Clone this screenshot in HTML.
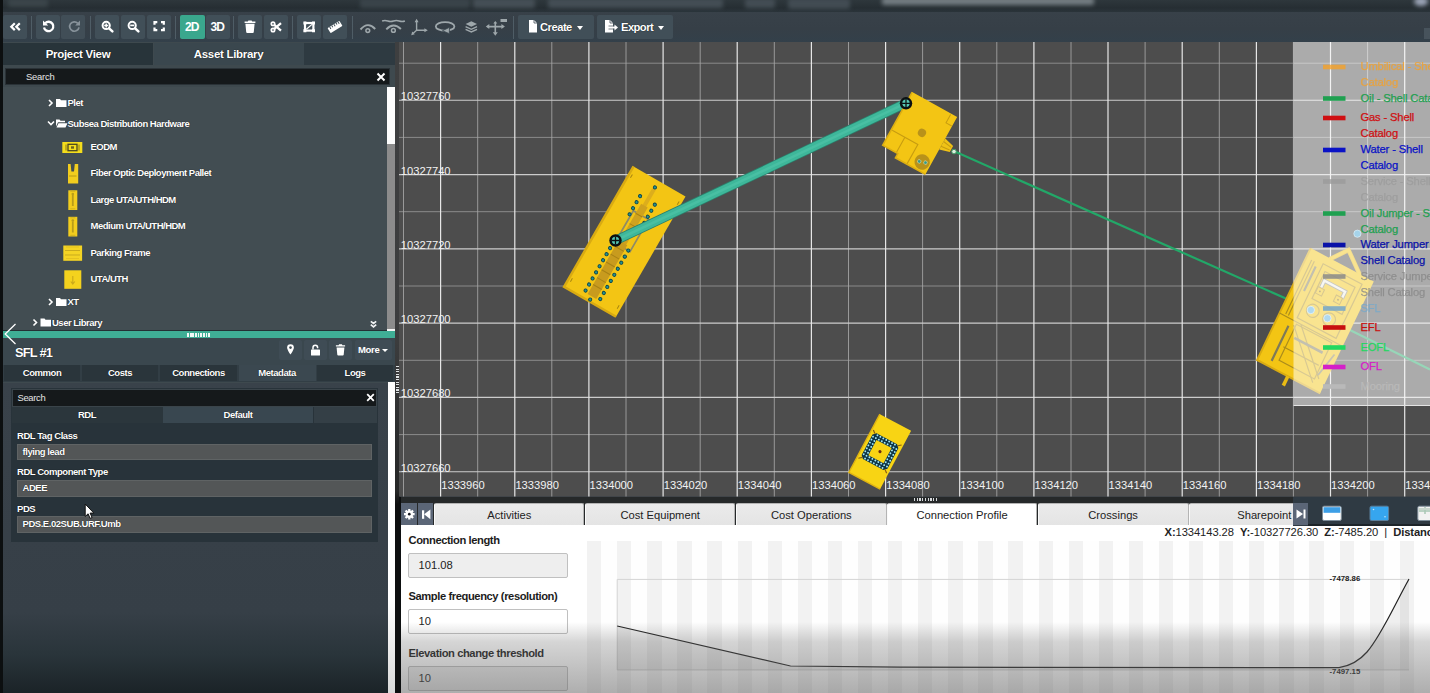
<!DOCTYPE html>
<html lang="en">
<head>
<meta charset="utf-8">
<title>Field layout</title>
<style>
*{box-sizing:border-box;margin:0;padding:0}
html,body{width:1430px;height:693px;overflow:hidden;background:#363f47;font-family:"Liberation Sans",sans-serif;}
#app{position:relative;width:1430px;height:693px;overflow:hidden;background:#363f47;}
.abs{position:absolute}
/* top strip */
#topstrip{left:0;top:0;width:1430px;height:13px;background:linear-gradient(#2e373c,#262e33 60%,#2b353b);overflow:hidden}
.blob{position:absolute;filter:blur(2px);border-radius:2px}
#toolbar{left:0;top:12px;width:1430px;height:30px;background:linear-gradient(#384149,#363f47 55%,#33404a);}
.tb{position:absolute;top:15px;height:24px;width:24px;background:#414f58;border-radius:2px}
.tb svg{position:absolute;left:0;top:0}
.tsep{position:absolute;top:16px;height:23px;width:1px;background:#4f5d66}
.tbtxt{color:#fff;font-size:12px;font-weight:bold;line-height:24.500px;text-align:center;letter-spacing:-0.900px;text-indent:-0.500px}
/* left panel */
#left{left:0;top:42px;width:396px;height:651px;background:#3e494e}
.ltab{position:absolute;top:43px;height:22px;color:#fff;font-size:11.5px;font-weight:bold;text-align:center;line-height:22px;letter-spacing:-0.3px;text-shadow:0 0 1px #000}
.search{position:absolute;background:#15191b;color:#e6e6e6;font-size:9.400px;font-weight:normal !important}
.tree{position:absolute;color:#fff;font-size:9.5px;font-weight:bold;letter-spacing:-0.35px;white-space:nowrap;line-height:12px;text-shadow:0 0 1px #111}
.ptab{position:absolute;top:364.600px;height:16.600px;line-height:16.400px;color:#fff;font-size:9.500px;font-weight:bold;text-align:center;letter-spacing:-0.450px;background:#2a353b;text-shadow:0 0 1px #000;white-space:nowrap}
.plabel{position:absolute;left:17px;color:#fff;font-size:9.500px;font-weight:bold;letter-spacing:-0.450px;line-height:12px;white-space:nowrap;text-shadow:0 0 1px #000}
.pinput{position:absolute;left:17px;width:355px;height:16.500px;background:#535657;border:1px solid #5f6364;color:#fff;font-size:9.500px;font-weight:bold;letter-spacing:-0.450px;line-height:14.500px;padding-left:4.500px;white-space:nowrap;text-shadow:0 0 1px #000}
.tree{letter-spacing:-0.500px}
.btab{position:absolute;top:502.500px;height:22px;line-height:22px;text-align:center;font-size:11.200px;color:#222;letter-spacing:0;border:1px solid #b4b4b4;border-left:1.500px solid #fafafa;border-bottom:none;border-radius:2px 2px 0 0;white-space:nowrap}
.blabel{position:absolute;left:408.500px;font-size:11.200px;font-weight:bold;color:#1c1c1c;letter-spacing:-0.420px;line-height:15px;white-space:nowrap}
.binput{position:absolute;left:408px;width:159.500px;height:25px;border:1px solid #c0c0c0;border-radius:2px;font-size:11.200px;color:#222;line-height:23px;padding-left:9.500px;letter-spacing:0}
</style>
</head>
<body>
<div id="app">
<div id="topstrip" class="abs"><div class="blob" style="left:8px;top:-2px;width:40px;height:9px;background:#3b454a"></div><div class="blob" style="left:360px;top:-2px;width:110px;height:10px;background:#3a444a"></div><div class="blob" style="left:473px;top:-2px;width:62px;height:10px;background:#454f56"></div><div class="blob" style="left:548px;top:-2px;width:175px;height:10px;background:#444e55"></div><div class="blob" style="left:745px;top:-2px;width:30px;height:10px;background:#434d54"></div><div class="blob" style="left:788px;top:-2px;width:62px;height:11px;background:#424c53"></div><div class="blob" style="left:882px;top:-3px;width:212px;height:8px;background:#747d82"></div><div class="blob" style="left:1414px;top:-3px;width:14px;height:9px;background:#9aa3b5;border-radius:50%"></div></div>
<div id="toolbar" class="abs"></div><div class="abs" style="left:1424px;top:28px;width:6px;height:11px;background:#47535c"></div>
<div id="left" class="abs"></div>
<!-- toolbar buttons -->
<div class="tsep" style="left:31px"></div>
<div class="tsep" style="left:90px"></div>
<div class="tsep" style="left:175px"></div>
<div class="tsep" style="left:233px"></div>
<div class="tsep" style="left:292px"></div>
<div class="tsep" style="left:352px"></div>
<div class="tsep" style="left:513px"></div>
<div class="tb" style="left:3px"><svg width="24" height="24" viewBox="0 0 24 24"><path d="M11.800 8.300 8.300 11.700l3.500 3.400M16.800 8.300 13.300 11.700l3.500 3.400" fill="none" stroke="#fff" stroke-width="2.200"/></svg></div>
<div class="tb" style="left:36px"><svg width="24" height="24" viewBox="0 0 24 24"><path d="M9.200 8.200A4.700 4.700 0 1 1 8 12.400" fill="none" stroke="#fff" stroke-width="2.300"/><path d="M7 5.400v5.200h5.200z" fill="#fff"/></svg></div>
<div class="tb" style="left:61px;background:#414e57"><svg width="24" height="24" viewBox="0 0 24 24"><path d="M16.800 8.300A4.700 4.700 0 1 0 18 12.300" fill="none" stroke="#87929a" stroke-width="1.700"/><path d="M19 5.600v4.800h-4.800z" fill="#87929a"/></svg></div>
<div class="tb" style="left:95px"><svg width="24" height="24" viewBox="0 0 24 24"><circle cx="11.200" cy="10.400" r="3.600" fill="none" stroke="#fff" stroke-width="2"/><path d="M14.100 13.300 17.400 16.400" stroke="#fff" stroke-width="2.500" stroke-linecap="round"/><path d="M9.200 10.400h4M11.200 8.400v4" stroke="#fff" stroke-width="1.500"/></svg></div>
<div class="tb" style="left:120.5px"><svg width="24" height="24" viewBox="0 0 24 24"><circle cx="11.200" cy="10.400" r="3.600" fill="none" stroke="#fff" stroke-width="2"/><path d="M14.100 13.300 17.400 16.400" stroke="#fff" stroke-width="2.500" stroke-linecap="round"/><path d="M9.200 10.400h4" stroke="#fff" stroke-width="1.700"/></svg></div>
<div class="tb" style="left:146.5px"><svg width="24" height="24" viewBox="0 0 24 24"><path d="M7.500 9.800V7.200H10.300M14 7.200h2.800V9.800M16.800 12.600v2.600H14M10.300 15.200H7.500V12.600" fill="none" stroke="#fff" stroke-width="2.200"/></svg></div>
<div class="tb tbtxt" style="left:179.5px;width:25px;background:#3aa78d;box-shadow:none;border-radius:2px">2D</div>
<div class="tb tbtxt" style="left:205.5px;width:24px">3D</div>
<div class="tb" style="left:238px"><svg width="24" height="24" viewBox="0 0 24 24"><path d="M7.4 8.8h9.2l-.8 8.3a1 1 0 0 1-1 .9H9.2a1 1 0 0 1-1-.9z" fill="#fff"/><path d="M6.6 6.4h3.2l.6-1h3.2l.6 1h3.2v1.5H6.600z" fill="#fff"/></svg></div>
<div class="tb" style="left:263.5px"><svg width="24" height="24" viewBox="0 0 24 24"><circle cx="9" cy="8.800" r="1.700" fill="none" stroke="#fff" stroke-width="1.700"/><circle cx="9" cy="15" r="1.700" fill="none" stroke="#fff" stroke-width="1.700"/><path d="M10.300 9.900 17 15.600M10.300 13.900 17 8.200" stroke="#fff" stroke-width="2.300"/></svg></div>
<div class="tb" style="left:297px"><svg width="24" height="24" viewBox="0 0 24 24"><rect x="8" y="8" width="8.400" height="7.600" fill="none" stroke="#fff" stroke-width="2.200"/><path d="M6.4 6.400h3v3h-3zM15 6.400h3v3h-3zM6.4 14.200h3v3h-3zM15 14.200h3v3h-3z" fill="#fff"/><path d="M9.400 14.200l5.600-4.800" stroke="#fff" stroke-width="1.2"/></svg></div>
<div class="tb" style="left:322.500px"><svg width="24" height="24" viewBox="0 0 24 24"><g transform="rotate(-32 12 12)"><rect x="5" y="9" width="14" height="6" rx=".8" fill="#fff"/><path d="M7.500 9v2.500M10 9v2M12.500 9v2.500M15 9v2M17.300 9v2.500" stroke="#414f58" stroke-width="1"/></g></svg></div>
<!-- grey icons -->
<svg class="abs" style="left:356px;top:15px" width="160" height="24" viewBox="0 0 160 24"><g fill="none" stroke="#9ea7ab" stroke-width="1.500">
<path d="M4.500 14.500Q12 6.100 19.200 14" stroke-width="1.900"/><circle cx="11.800" cy="15.600" r="1.900" stroke-width="1.500"/>
<path d="M30.300 14.300Q37.500 6.800 44.900 14" stroke-width="1.900"/><circle cx="37.400" cy="15.400" r="1.900" stroke-width="1.500"/><path d="M26.100 6q2.800-1 5.700 0t5.700 0 5.700 0 5.700 0" stroke-width="1.600"/>
<path d="M60.600 6v9.200h8.500M60.600 15.200l-3.600 3.400" stroke-width="1.400"/><path d="M60.600 3.800l-2 3.400h4zM71.800 15.200l-3.400-2v4zM55.200 20.300l1-3.700 2.600 2.700z" fill="#9ea7ab" stroke="none"/>
<ellipse cx="89.100" cy="11.400" rx="9.300" ry="4.300" stroke-width="1.800"/><path d="M93.500 12.300l-7 3.400 6.800 3z" fill="#9ea7ab" stroke="#37444c" stroke-width=".800"/>
<path d="M115.300 6.300l5.700 2.700-5.700 2.700-5.700-2.700z" fill="#9ea7ab" stroke="none"/><path d="M109.600 11.600l5.700 2.700 5.700-2.700M109.600 14.300l5.700 2.700 5.700-2.700" stroke-width="1.400"/>
<path d="M131.500 11.600h15.600M139.300 7.500v11" stroke-width="1.600"/><path d="M129.800 11.600l3.500-2.500v5zM148.900 11.600l-3.500-2.500v5zM139.300 20.800l-2.500-3.500h5zM139.300 6l-2 2.500h4z" fill="#9ea7ab" stroke="none"/><path d="M144.500 4h6.500v3h-6.500z" fill="#9ea7ab" stroke="none"/>
</g></svg>
<!-- create/export -->
<div class="tb" style="left:517.500px;width:76.500px"><svg width="24" height="24" viewBox="1 1 24 24"><path d="M12 6h5l3 3v9.500h-8z" fill="#fff"/><path d="M17 6v3h3" fill="none" stroke="#414f58" stroke-width=".8"/></svg><span class="abs" style="left:22.500px;top:0;line-height:24.500px;color:#fff;font-size:11.200px;font-weight:bold;letter-spacing:-0.500px;text-shadow:0 0 1px #000">Create</span><span class="abs" style="left:59.700px;top:11px;border:3.500px solid transparent;border-top:4px solid #fff;border-bottom:0"></span></div>
<div class="tb" style="left:596.500px;width:76.500px"><svg width="26" height="24" viewBox="1 1 26 24"><path d="M9 6h5l3 3v9.500H9z" fill="#fff"/><path d="M14 6v3h3" fill="none" stroke="#414f58" stroke-width=".8"/><path d="M13 13.500h6.500" stroke="#fff" stroke-width="2"/><path d="M18.500 10.500l3.500 3-3.500 3z" fill="#fff"/><path d="M12.500 12h5M12.500 15h5" stroke="#414f58" stroke-width=".7"/></svg><span class="abs" style="left:24.500px;top:0;line-height:24.500px;color:#fff;font-size:11.200px;font-weight:bold;letter-spacing:-0.550px;text-shadow:0 0 1px #000">Export</span><span class="abs" style="left:61.500px;top:11px;border:3.500px solid transparent;border-top:4px solid #fff;border-bottom:0"></span></div>

<!-- left top: tabs, search, tree -->
<div class="abs" style="left:0;top:0;width:2.500px;height:693px;background:#0c0f10"></div>
<div class="ltab" style="left:3px;width:150px;background:#28343a">Project View</div>
<div class="ltab" style="left:153.500px;width:150px;background:#3a474e">Asset Library</div>
<div class="abs" style="left:304px;top:43px;width:91px;height:22px;background:#2e3a41"></div>
<div class="search" style="left:5px;top:68px;width:385px;height:17px;line-height:16px;padding-left:20px;border:1px solid #2a3237;font-weight:bold;letter-spacing:-0.200px">Search</div>
<svg class="abs" style="left:376px;top:72px" width="10" height="10" viewBox="0 0 10 10"><path d="M1.500 1.500l7 7M8.500 1.500l-7 7" stroke="#fff" stroke-width="2"/></svg>
<div class="abs" style="left:3px;top:87px;width:384px;height:244px;background:#424d52"></div>
<!-- scrollbar -->
<div class="abs" style="left:387px;top:87px;width:7.500px;height:244px;background:#8c8c8c"></div>
<div class="abs" style="left:387px;top:87px;width:7.500px;height:56.500px;background:#fdfdfd"></div><div class="abs" style="left:387px;top:329px;width:7.500px;height:2px;background:#f4f4f4"></div><div class="abs" style="left:3px;top:330.300px;width:384px;height:1px;background:#243034"></div>
<!-- tree rows -->
<svg class="abs" style="left:0;top:87px" width="396" height="244" viewBox="0 87 396 244">
<g fill="none" stroke="#fff" stroke-width="1.600">
<path d="M49 100l3 3-3 3"/><path d="M48 121.500l3 3 3-3"/><path d="M49 299l3 3-3 3"/><path d="M33.500 319.500l3 3-3 3"/>
<path d="M370.800 321.300l2.700 2.200 2.700-2.200M370.800 324.600l2.700 2.200 2.700-2.200" stroke-width="1.700" stroke="#f0f2f3"/>
</g>
<g fill="#fff">
<path d="M56 99h4l1 1.200h5.500v6.800H56z"/>
<path d="M56 298h4l1 1.200h5.500v6.800H56z"/>
<path d="M40.500 318.500h4l1 1.200H51v6.800H40.500z"/>
<path d="M56 119.500h3.500l1 1.200H65v1.600h-7l-2 4.200zM58.500 123.200H67.500l-2 4.300H56.500z"/>
</g>
<!-- asset icons -->
<g>
<rect x="62.300" y="142" width="20" height="11" fill="#f4dd1c"/><rect x="68" y="144.300" width="9" height="6.400" fill="none" stroke="#4a4620" stroke-width="1.300"/><rect x="71" y="146.300" width="3" height="2.400" fill="#6a6220"/><path d="M66 144.500v6M79 144.500v6" stroke="#8a7a18" stroke-width="1"/>
<path d="M68 164h2.600l.8 7.500h2.600l.8-7.500h3.400v19.600H68z" fill="#f2cd1e"/><path d="M69 176h7.500" stroke="#b89a14" stroke-width="1"/>
<rect x="68.300" y="190.300" width="9" height="19.700" fill="#f2cd1e"/><path d="M72.800 195v11" stroke="#b89c1a" stroke-width="1.800"/><circle cx="72.800" cy="194" r="1.300" fill="#b89c1a"/><path d="M70.300 191.300h5M70.300 208.800h5" stroke="#c9ab1c" stroke-width=".800"/>
<rect x="68.300" y="216.800" width="9" height="19.700" fill="#f2cd1e"/><path d="M72.800 221.500v11" stroke="#b89c1a" stroke-width="1.800"/><circle cx="72.800" cy="220.500" r="1.300" fill="#b89c1a"/><path d="M70.300 217.800h5M70.300 235.300h5" stroke="#c9ab1c" stroke-width=".800"/>
<rect x="63.300" y="245.500" width="18.800" height="15.300" fill="#f4d424"/><path d="M65 250.500h15M65 255h15" stroke="#c9ab1d" stroke-width="1"/><path d="M66 247h13M66 258.500h13" stroke="#e0be20" stroke-width=".8"/>
<rect x="64.300" y="270.300" width="17" height="18.500" fill="#f4d21e"/><path d="M72.800 276v7.500M70.800 281.500l2 2.500 2-2.500" stroke="#c9a91a" stroke-width="1.100" fill="none"/>
</g>
</svg>
<div class="tree" style="left:67.500px;top:97px">Plet</div>
<div class="tree" style="left:67.500px;top:117.500px">Subsea Distribution Hardware</div>
<div class="tree" style="left:90.500px;top:141px">EODM</div>
<div class="tree" style="left:90.500px;top:167px">Fiber Optic Deployment Pallet</div>
<div class="tree" style="left:90.500px;top:193.500px">Large UTA/UTH/HDM</div>
<div class="tree" style="left:90.500px;top:220px">Medium UTA/UTH/HDM</div>
<div class="tree" style="left:90.500px;top:246.500px">Parking Frame</div>
<div class="tree" style="left:90.500px;top:273px">UTA/UTH</div>
<div class="tree" style="left:67.500px;top:296px">XT</div>
<div class="tree" style="left:52px;top:316.500px">User Library</div>
<!-- teal splitter -->
<div class="abs" style="left:3px;top:331px;width:392px;height:6.500px;background:#3fae95"></div>
<div class="abs" style="left:186.700px;top:332.800px;width:23.600px;height:4.200px;background:repeating-linear-gradient(90deg,#f2faf7 0 1.900px,transparent 1.900px 2.650px)"></div>


<!-- left bottom: SFL #1 properties -->
<div class="abs" style="left:3px;top:337.500px;width:392px;height:27px;background:#3a474e"></div>
<div class="abs" style="left:15px;top:344px;color:#fff;font-size:12.800px;font-weight:bold;line-height:17px;letter-spacing:-0.750px;text-shadow:0 0 1px #000">SFL #1</div>
<div class="abs" style="left:278.500px;top:340px;width:23px;height:19.500px;background:#3f4c55;border-radius:2px"><svg width="23" height="20" viewBox="0 0 23 20"><path d="M11.500 4.200a3.400 3.400 0 0 1 3.400 3.400c0 2.400-3.400 7-3.400 7s-3.400-4.600-3.400-7a3.400 3.400 0 0 1 3.400-3.400z" fill="#fff"/><circle cx="11.500" cy="7.600" r="1.300" fill="#3f4c55"/></svg></div>
<div class="abs" style="left:303.500px;top:340px;width:23px;height:19.500px;background:#3f4c55;border-radius:2px"><svg width="23" height="20" viewBox="0 0 23 20"><rect x="7" y="9.500" width="9" height="6" rx=".6" fill="#fff"/><path d="M9 9.500V7.500a2.300 2.300 0 0 1 4.600 0v.800" fill="none" stroke="#fff" stroke-width="1.500"/></svg></div>
<div class="abs" style="left:328.500px;top:340px;width:23px;height:19.500px;background:#3f4c55;border-radius:2px"><svg width="23" height="20" viewBox="0 0 23 20"><path d="M7.600 7.400h7.800l-.7 7.300a.9.900 0 0 1-.9.800H9.200a.9.900 0 0 1-.9-.8z" fill="#fff"/><path d="M6.900 5.200h2.700l.5-.9h2.800l.5.900h2.700v1.400H6.900z" fill="#fff"/></svg></div>
<div class="abs" style="left:354.500px;top:340px;width:37px;height:19.500px;background:#3f4c55;border-radius:2px;color:#fff;font-size:9.500px;font-weight:bold;line-height:19px;padding-left:3.500px;letter-spacing:-0.300px">More<span class="abs" style="left:27px;top:9px;border:3px solid transparent;border-top:3.500px solid #fff;border-bottom:0"></span></div>
<!-- tabs -->
<div class="abs" style="left:3px;top:364.500px;width:392px;height:17.500px;background:#323e45"></div>
<div class="ptab" style="left:4px;width:76px">Common</div>
<div class="ptab" style="left:82px;width:76px">Costs</div>
<div class="ptab" style="left:160px;width:77px">Connections</div>
<div class="ptab" style="left:238.500px;width:77px;background:#3b4850">Metadata</div>
<div class="ptab" style="left:317px;width:76px">Logs</div>
<!-- body -->
<div class="abs" style="left:3px;top:382.500px;width:385px;height:310.500px;background:linear-gradient(#39424a 0,#363f47 74%,#29343a 88%,#1b2327 100%)"></div>
<div class="abs" style="left:10.500px;top:388px;width:367px;height:154px;background:#28333a"></div>
<div class="search" style="left:11.500px;top:389px;width:365.500px;height:17.500px;line-height:16px;padding-left:5px;border:1px solid #3a444a;font-weight:bold;letter-spacing:-0.300px">Search</div>
<svg class="abs" style="left:365.500px;top:393px" width="9" height="9" viewBox="0 0 9 9"><path d="M1.200 1.200l6.600 6.600M7.800 1.200l-6.600 6.600" stroke="#fff" stroke-width="1.800"/></svg>
<div class="ptab" style="left:11.500px;top:407px;width:151px;height:16px;line-height:16px;background:#2b363c">RDL</div>
<div class="ptab" style="left:163px;top:407px;width:150px;height:16px;line-height:16px;background:#394750">Default</div>
<div class="abs" style="left:313.500px;top:407px;width:63.500px;height:16px;background:#343f46"></div>
<div class="plabel" style="top:430px">RDL Tag Class</div>
<div class="pinput" style="top:443.500px">flying lead</div>
<div class="plabel" style="top:466px">RDL Component Type</div>
<div class="pinput" style="top:480px">ADEE</div>
<div class="plabel" style="top:502.500px">PDS</div>
<div class="pinput" style="top:516px">PDS.E.02SUB.URF.Umb</div>
<!-- mouse cursor -->
<svg class="abs" style="left:84px;top:503px" width="12" height="17" viewBox="0 0 12 17"><path d="M1.200 1v12.500l2.900-2.700 2 4.600 2-.9-2-4.400h3.800z" fill="#fff" stroke="#111" stroke-width="1"/></svg>
<!-- right edge scrollbar + splitter -->
<div class="abs" style="left:387.500px;top:381.500px;width:7px;height:311.500px;background:linear-gradient(#fff 0,#fff 70%,#d9d9d9 100%)"></div>
<div class="abs" style="left:394.500px;top:42px;width:5px;height:651px;background:linear-gradient(#3e3f40 0,#3c3d3e 45%,#2c2d2e 60%,#262727 69%,#0e0f10 71%,#0e0f10 100%)"></div>
<div class="abs" style="left:396px;top:366px;width:4.300px;height:27px;background:repeating-linear-gradient(#dfe3e5 0 1.200px,transparent 1.200px 2.600px)"></div>
<svg id="chev" class="abs" style="left:2px;top:323px" width="16" height="22" viewBox="0 0 16 22"><path d="M13.500 1L3.200 11l10.300 10" fill="none" stroke="#fff" stroke-width="1.300"/></svg>

<svg class="abs" style="left:399px;top:42px" width="1031" height="454.5" viewBox="399 42 1031 454.5" font-family="Liberation Sans, sans-serif">
<rect x="399" y="42" width="1031" height="454.5" fill="#4d4d4d"/>
<path d="M399 63.2H1430M399 137.4H1430M399 211.7H1430M399 286.0H1430M399 360.3H1430M399 434.6H1430" stroke="#969696" stroke-width="0.85" fill="none"/>
<path d="M403.5 42V496.5M477.7 42V496.5M551.8 42V496.5M626.0 42V496.5M700.2 42V496.5M774.3 42V496.5M848.5 42V496.5M922.6 42V496.5M996.8 42V496.5M1071.0 42V496.5M1145.1 42V496.5M1219.3 42V496.5M1293.4 42V496.5M1367.6 42V496.5" stroke="#a6a6a6" stroke-width="0.85" fill="none"/>
<path d="M399 100.3H1430M399 174.6H1430M399 248.9H1430M399 323.1H1430M399 397.4H1430M399 471.7H1430" stroke="#cccccc" stroke-width="1.1" fill="none"/>
<path d="M440.6 42V496.5M514.8 42V496.5M588.9 42V496.5M663.1 42V496.5M737.2 42V496.5M811.4 42V496.5M885.6 42V496.5M959.7 42V496.5M1033.9 42V496.5M1108.0 42V496.5M1182.2 42V496.5M1256.4 42V496.5M1330.5 42V496.5M1404.7 42V496.5" stroke="#e6e6e6" stroke-width="1.2" fill="none"/>
<g fill="#f2f2f2" font-size="11.2">
<text x="400.8" y="100.2">10327760</text>
<text x="400.8" y="174.5">10327740</text>
<text x="400.8" y="248.8">10327720</text>
<text x="400.8" y="323.0">10327700</text>
<text x="400.8" y="397.3">10327680</text>
<text x="400.8" y="471.6">10327660</text>
<text x="441.2" y="489">1333960</text>
<text x="515.4" y="489">1333980</text>
<text x="589.5" y="489">1334000</text>
<text x="663.7" y="489">1334020</text>
<text x="737.8" y="489">1334040</text>
<text x="812.0" y="489">1334060</text>
<text x="886.2" y="489">1334080</text>
<text x="960.3" y="489">1334100</text>
<text x="1034.5" y="489">1334120</text>
<text x="1108.6" y="489">1334140</text>
<text x="1182.8" y="489">1334160</text>
<text x="1257.0" y="489">1334180</text>
<text x="1331.1" y="489">1334200</text>
<text x="1405.3" y="489">1334220</text>
</g>
<path d="M954.300 151.300L1287 299L1430 369.400" stroke="#22a868" stroke-width="2.200" fill="none"/>
<g transform="translate(624.8 241.6) rotate(30)">
<rect x="-30" y="-69.5" width="60" height="139" fill="#f3c514"/>
<path d="M-30 -69.500V69.500H30" fill="none" stroke="#d9ab12" stroke-width="2.500"/>
<rect x="-8" y="-31" width="17.500" height="37" fill="none" stroke="#8f8b68" stroke-width="1.700"/>
<rect x="-3" y="-60" width="4" height="22" fill="#dcae1c"/>
<rect x="-4.800" y="-41" width="7.600" height="44" fill="#cfa21e"/>
<rect x="-6" y="2" width="10" height="62" fill="#c89b1e"/>
<path d="M-6 9h10M-6 18h10M-6 27h10M-6 36h10M-6 45h10M-6 53h10M-4.800 -30h7.600M-4.800 -18h7.600M-4.800 -8h7.600" stroke="#a88214" stroke-width="1"/>
<circle cx="-9.5" cy="-47" r="1.600" fill="#23958f" stroke="#0c4450" stroke-width=".900"/>
<circle cx="7.5" cy="-47" r="1.600" fill="#23958f" stroke="#0c4450" stroke-width=".900"/>
<circle cx="-9.5" cy="-40" r="1.600" fill="#23958f" stroke="#0c4450" stroke-width=".900"/>
<circle cx="7.5" cy="-40" r="1.600" fill="#23958f" stroke="#0c4450" stroke-width=".900"/>
<circle cx="-9.5" cy="-33" r="1.600" fill="#23958f" stroke="#0c4450" stroke-width=".900"/>
<circle cx="7.5" cy="-33" r="1.600" fill="#23958f" stroke="#0c4450" stroke-width=".900"/>
<circle cx="-9.5" cy="-26" r="1.600" fill="#23958f" stroke="#0c4450" stroke-width=".900"/>
<circle cx="7.5" cy="-26" r="1.600" fill="#23958f" stroke="#0c4450" stroke-width=".900"/>
<circle cx="-9.5" cy="6" r="1.600" fill="#23958f" stroke="#0c4450" stroke-width=".900"/>
<circle cx="7.5" cy="6" r="1.600" fill="#23958f" stroke="#0c4450" stroke-width=".900"/>
<circle cx="-9.5" cy="13" r="1.600" fill="#23958f" stroke="#0c4450" stroke-width=".900"/>
<circle cx="7.5" cy="13" r="1.600" fill="#23958f" stroke="#0c4450" stroke-width=".900"/>
<circle cx="-9.5" cy="20" r="1.600" fill="#23958f" stroke="#0c4450" stroke-width=".900"/>
<circle cx="7.5" cy="20" r="1.600" fill="#23958f" stroke="#0c4450" stroke-width=".900"/>
<circle cx="-9.5" cy="27" r="1.600" fill="#23958f" stroke="#0c4450" stroke-width=".900"/>
<circle cx="7.5" cy="27" r="1.600" fill="#23958f" stroke="#0c4450" stroke-width=".900"/>
<circle cx="-9.5" cy="34" r="1.600" fill="#23958f" stroke="#0c4450" stroke-width=".900"/>
<circle cx="7.5" cy="34" r="1.600" fill="#23958f" stroke="#0c4450" stroke-width=".900"/>
<circle cx="-9.5" cy="41" r="1.600" fill="#23958f" stroke="#0c4450" stroke-width=".900"/>
<circle cx="7.5" cy="41" r="1.600" fill="#23958f" stroke="#0c4450" stroke-width=".900"/>
<circle cx="-9.5" cy="48" r="1.600" fill="#23958f" stroke="#0c4450" stroke-width=".900"/>
<circle cx="7.5" cy="48" r="1.600" fill="#23958f" stroke="#0c4450" stroke-width=".900"/>
<circle cx="-9.5" cy="55" r="1.600" fill="#23958f" stroke="#0c4450" stroke-width=".900"/>
<circle cx="7.5" cy="55" r="1.600" fill="#23958f" stroke="#0c4450" stroke-width=".900"/>
<circle cx="-9.5" cy="62" r="1.600" fill="#23958f" stroke="#0c4450" stroke-width=".900"/>
<circle cx="7.5" cy="62" r="1.600" fill="#23958f" stroke="#0c4450" stroke-width=".900"/>
<circle cx="-1" cy="-62" r="1.600" fill="#23958f" stroke="#0c4450" stroke-width=".900"/>
<circle cx="-1" cy="67.5" r="1.600" fill="#23958f" stroke="#0c4450" stroke-width=".900"/>
<path d="M-27 -62v4M27 -62v4M-27 58v4M27 58v4" stroke="#a88610" stroke-width="1"/>
</g>
<path d="M615.500 240.500L906 103.200" stroke="#2b7f6c" stroke-width="9.600" fill="none"/>
<path d="M615.500 240.500L906 103.200" stroke="#3eb79a" stroke-width="8" fill="none"/>
<path d="M615.500 240.500L906 103.200" stroke="#52c7ab" stroke-width="2.500" fill="none" opacity=".55"/>
<g transform="translate(912.200 92.100) rotate(29)">
<path d="M51.400 24.500l10.500 2.700v7l-10.500 3z" fill="#f0c216"/><path d="M51.400 28l9.500 1.500M51.400 33.500l9.500-1" stroke="#c79c10" stroke-width="1"/>
<path d="M0 0H51.400V65.600H17.200V60.800H0z" fill="#f3c514"/>
<path d="M0 0V60.800H17.200V65.600H51.400" fill="none" stroke="#dcae12" stroke-width="1.600"/>
<path d="M1 43H30.300V65M15.500 43V60" stroke="#c79c10" stroke-width="1.100" fill="none"/>
<path d="M44.500 1v9.500h6.500" stroke="#c79c10" stroke-width="1" fill="none"/>
<circle cx="28.300" cy="30.900" r="4.100" fill="#b8921a"/>
<circle cx="42.600" cy="56.300" r="7.700" fill="#b8921a"/>
<circle cx="39.800" cy="57.200" r="1.800" fill="#2e9a8a" stroke="#e8d9a0" stroke-width=".600"/><circle cx="45.800" cy="55.200" r="1.800" fill="#2e9a8a" stroke="#e8d9a0" stroke-width=".600"/>
</g>
<circle cx="954" cy="151.600" r="2.300" fill="#dfeee0" stroke="#3f9a62" stroke-width="1"/>
<circle cx="615.5" cy="240.5" r="6.200" fill="#0b1112"/><circle cx="615.5" cy="240.5" r="3.700" fill="#57c8b4"/><path d="M611.5 240.5h8M615.5 236.5v8" stroke="#0b1112" stroke-width="1.300"/>
<circle cx="906" cy="103.3" r="6.200" fill="#0b1112"/><circle cx="906" cy="103.3" r="3.700" fill="#57c8b4"/><path d="M902 103.3h8M906 99.3v8" stroke="#0b1112" stroke-width="1.300"/>
<g transform="translate(880 451.600) rotate(28)">
<rect x="-17.700" y="-33" width="35.400" height="66" fill="#f8d414"/>
<path d="M-17.700 -33V33H17.700" fill="none" stroke="#e0b412" stroke-width="1.400"/>
<rect x="-11.600" y="-11.600" width="23.200" height="23.200" fill="none" stroke="#0e3546" stroke-width="6" stroke-linejoin="bevel"/>
<circle cx="-10.00" cy="-10.00" r="0.950" fill="#a5e9f5"/>
<circle cx="-10.00" cy="10.00" r="0.950" fill="#a5e9f5"/>
<circle cx="10.00" cy="-10.00" r="0.950" fill="#a5e9f5"/>
<circle cx="-6.67" cy="-10.00" r="0.950" fill="#a5e9f5"/>
<circle cx="-6.67" cy="10.00" r="0.950" fill="#a5e9f5"/>
<circle cx="-10.00" cy="-6.67" r="0.950" fill="#a5e9f5"/>
<circle cx="10.00" cy="-6.67" r="0.950" fill="#a5e9f5"/>
<circle cx="-3.33" cy="-10.00" r="0.950" fill="#a5e9f5"/>
<circle cx="-3.33" cy="10.00" r="0.950" fill="#a5e9f5"/>
<circle cx="-10.00" cy="-3.33" r="0.950" fill="#a5e9f5"/>
<circle cx="10.00" cy="-3.33" r="0.950" fill="#a5e9f5"/>
<circle cx="0.00" cy="-10.00" r="0.950" fill="#a5e9f5"/>
<circle cx="0.00" cy="10.00" r="0.950" fill="#a5e9f5"/>
<circle cx="-10.00" cy="0.00" r="0.950" fill="#a5e9f5"/>
<circle cx="10.00" cy="0.00" r="0.950" fill="#a5e9f5"/>
<circle cx="3.33" cy="-10.00" r="0.950" fill="#a5e9f5"/>
<circle cx="3.33" cy="10.00" r="0.950" fill="#a5e9f5"/>
<circle cx="-10.00" cy="3.33" r="0.950" fill="#a5e9f5"/>
<circle cx="10.00" cy="3.33" r="0.950" fill="#a5e9f5"/>
<circle cx="6.67" cy="-10.00" r="0.950" fill="#a5e9f5"/>
<circle cx="6.67" cy="10.00" r="0.950" fill="#a5e9f5"/>
<circle cx="-10.00" cy="6.67" r="0.950" fill="#a5e9f5"/>
<circle cx="10.00" cy="6.67" r="0.950" fill="#a5e9f5"/>
<circle cx="10.00" cy="10.00" r="0.950" fill="#a5e9f5"/>
<circle cx="-9.90" cy="-13.20" r="0.950" fill="#a5e9f5"/>
<circle cx="-9.90" cy="13.20" r="0.950" fill="#a5e9f5"/>
<circle cx="-13.20" cy="-9.90" r="0.950" fill="#a5e9f5"/>
<circle cx="13.20" cy="-9.90" r="0.950" fill="#a5e9f5"/>
<circle cx="-6.60" cy="-13.20" r="0.950" fill="#a5e9f5"/>
<circle cx="-6.60" cy="13.20" r="0.950" fill="#a5e9f5"/>
<circle cx="-13.20" cy="-6.60" r="0.950" fill="#a5e9f5"/>
<circle cx="13.20" cy="-6.60" r="0.950" fill="#a5e9f5"/>
<circle cx="-3.30" cy="-13.20" r="0.950" fill="#a5e9f5"/>
<circle cx="-3.30" cy="13.20" r="0.950" fill="#a5e9f5"/>
<circle cx="-13.20" cy="-3.30" r="0.950" fill="#a5e9f5"/>
<circle cx="13.20" cy="-3.30" r="0.950" fill="#a5e9f5"/>
<circle cx="0.00" cy="-13.20" r="0.950" fill="#a5e9f5"/>
<circle cx="0.00" cy="13.20" r="0.950" fill="#a5e9f5"/>
<circle cx="-13.20" cy="0.00" r="0.950" fill="#a5e9f5"/>
<circle cx="13.20" cy="0.00" r="0.950" fill="#a5e9f5"/>
<circle cx="3.30" cy="-13.20" r="0.950" fill="#a5e9f5"/>
<circle cx="3.30" cy="13.20" r="0.950" fill="#a5e9f5"/>
<circle cx="-13.20" cy="3.30" r="0.950" fill="#a5e9f5"/>
<circle cx="13.20" cy="3.30" r="0.950" fill="#a5e9f5"/>
<circle cx="6.60" cy="-13.20" r="0.950" fill="#a5e9f5"/>
<circle cx="6.60" cy="13.20" r="0.950" fill="#a5e9f5"/>
<circle cx="-13.20" cy="6.60" r="0.950" fill="#a5e9f5"/>
<circle cx="13.20" cy="6.60" r="0.950" fill="#a5e9f5"/>
<circle cx="9.90" cy="-13.20" r="0.950" fill="#a5e9f5"/>
<circle cx="9.90" cy="13.20" r="0.950" fill="#a5e9f5"/>
<circle cx="-13.20" cy="9.90" r="0.950" fill="#a5e9f5"/>
<circle cx="13.20" cy="9.90" r="0.950" fill="#a5e9f5"/>
<circle cx="0" cy="0" r="1.600" fill="#6a2c10"/>
<path d="M-16 -16l3 2.500M16 -16l-3 2.500M-16 16l3-2.500M16 16l-3-2.500" stroke="#8a5d10" stroke-width="1.200"/>
</g>
<g transform="matrix(0.8838 0.4664 -0.4323 0.9024 1310.700 248.100)">
<path d="M22 1L35 -16L60 4" fill="none" stroke="#e2b514" stroke-width="4.500" stroke-linejoin="miter"/>
<path d="M22 1L35 -16L60 4" fill="none" stroke="#f3c514" stroke-width="2.800"/>
<rect x="0" y="0" width="71.400" height="124" fill="#f3c514"/>
<path d="M0 0V124H71.400" fill="none" stroke="#d9ab12" stroke-width="2"/>
<rect x="33" y="124" width="3.600" height="10.500" fill="#e9bb14"/>
<g fill="none" stroke="#ab8c1c" stroke-width="1.200">
<rect x="18" y="8" width="44" height="60"/><rect x="23" y="14" width="34" height="30"/>
<path d="M6 10V70M9 10V70M18 76L60 118M24 72L64 112M18 100H58M0 72H71"/>
<rect x="20" y="74" width="40" height="40"/>
<circle cx="29" cy="54.500" r="6.500"/><circle cx="47.500" cy="54.500" r="6.500"/>
</g>
<path d="M12.500 14V41M13.500 79V118" stroke="#7f7a58" stroke-width="2.200"/>
<path d="M24 87H56" stroke="#7f7a58" stroke-width="2.600"/><path d="M67.500 83L61.500 109" stroke="#8a845e" stroke-width="1.800"/>
<path d="M26.500 30V22.500H50V30" fill="none" stroke="#8a8a80" stroke-width="4.200"/><path d="M26.500 30V22.500H50V30" fill="none" stroke="#efeee6" stroke-width="2.400"/>
<rect x="23.500" y="30.500" width="7" height="7" fill="#f3c514" stroke="#a8881a" stroke-width="1"/><rect x="43.500" y="29.500" width="7" height="7" fill="#f3c514" stroke="#a8881a" stroke-width="1"/><circle cx="27" cy="34" r=".900" fill="#7a6414"/><circle cx="47" cy="33" r=".900" fill="#7a6414"/>
</g>
<circle cx="1310.800" cy="310" r="3.700" fill="#58aede" stroke="#c8e4f2" stroke-width=".800"/>
<circle cx="1327.400" cy="318.300" r="3.700" fill="#58aede" stroke="#c8e4f2" stroke-width=".800"/>
<rect x="1293.500" y="42" width="137" height="363.500" fill="#ffffff" fill-opacity=".53"/>
<path d="M1293.500 405.500H1430" stroke="#e4e4e4" stroke-width="1.200"/>
<circle cx="1357.400" cy="233.700" r="3.600" fill="#a5d3ea" stroke="#d8ecf6" stroke-width=".800"/>
<g font-size="11.200" letter-spacing="-0.150">
<rect x="1323" y="64.7" width="22.500" height="4.600" fill="#f5a128" opacity="0.8"/>
<text x="1360.500" y="70.2" fill="#f5a128" stroke="#f5a128" stroke-width=".250" opacity="0.8">Umbilical - Shell</text>
<text x="1360.500" y="86.0" fill="#f5a128" stroke="#f5a128" stroke-width=".250" opacity="0.8">Catalog</text>
<rect x="1323" y="96.2" width="22.500" height="4.600" fill="#1fa050" opacity="1"/>
<text x="1360.500" y="101.7" fill="#1fa050" stroke="#1fa050" stroke-width=".250" opacity="1">Oil - Shell Catalog</text>
<rect x="1323" y="115.7" width="22.500" height="4.600" fill="#cf0f12" opacity="1"/>
<text x="1360.500" y="121.2" fill="#cf0f12" stroke="#cf0f12" stroke-width=".250" opacity="1">Gas - Shell</text>
<text x="1360.500" y="137.0" fill="#cf0f12" stroke="#cf0f12" stroke-width=".250" opacity="1">Catalog</text>
<rect x="1323" y="147.7" width="22.500" height="4.600" fill="#0a12c6" opacity="1"/>
<text x="1360.500" y="153.2" fill="#0a12c6" stroke="#0a12c6" stroke-width=".250" opacity="1">Water - Shell</text>
<text x="1360.500" y="169.0" fill="#0a12c6" stroke="#0a12c6" stroke-width=".250" opacity="1">Catalog</text>
<rect x="1323" y="179.2" width="22.500" height="4.600" fill="#9b9b9b" opacity="0.8"/>
<text x="1360.500" y="184.7" fill="#9b9b9b" stroke="#9b9b9b" stroke-width=".250" opacity="0.8">Service - Shell</text>
<text x="1360.500" y="200.5" fill="#9b9b9b" stroke="#9b9b9b" stroke-width=".250" opacity="0.8">Catalog</text>
<rect x="1323" y="211.2" width="22.500" height="4.600" fill="#1fa050" opacity="1"/>
<text x="1360.500" y="216.7" fill="#1fa050" stroke="#1fa050" stroke-width=".250" opacity="1">Oil Jumper - Shell</text>
<text x="1360.500" y="232.5" fill="#1fa050" stroke="#1fa050" stroke-width=".250" opacity="1">Catalog</text>
<rect x="1323" y="242.7" width="22.500" height="4.600" fill="#0a12a8" opacity="1"/>
<text x="1360.500" y="248.2" fill="#0a12a8" stroke="#0a12a8" stroke-width=".250" opacity="1">Water Jumper -</text>
<text x="1360.500" y="264.0" fill="#0a12a8" stroke="#0a12a8" stroke-width=".250" opacity="1">Shell Catalog</text>
<rect x="1323" y="274.2" width="22.500" height="4.600" fill="#8a8a8a" opacity="0.85"/>
<text x="1360.500" y="279.7" fill="#8a8a8a" stroke="#8a8a8a" stroke-width=".250" opacity="0.85">Service Jumper -</text>
<text x="1360.500" y="295.5" fill="#8a8a8a" stroke="#8a8a8a" stroke-width=".250" opacity="0.85">Shell Catalog</text>
<rect x="1323" y="306.2" width="22.500" height="4.600" fill="#7aa9c8" opacity="0.9"/>
<text x="1360.500" y="311.7" fill="#7aa9c8" stroke="#7aa9c8" stroke-width=".250" opacity="0.9">SFL</text>
<rect x="1323" y="325.2" width="22.500" height="4.600" fill="#c8100f" opacity="1"/>
<text x="1360.500" y="330.7" fill="#c8100f" stroke="#c8100f" stroke-width=".250" opacity="1">EFL</text>
<rect x="1323" y="345.2" width="22.500" height="4.600" fill="#22d860" opacity="1"/>
<text x="1360.500" y="350.7" fill="#22d860" stroke="#22d860" stroke-width=".250" opacity="1">EOFL</text>
<rect x="1323" y="364.7" width="22.500" height="4.600" fill="#d420c8" opacity="1"/>
<text x="1360.500" y="370.2" fill="#d420c8" stroke="#d420c8" stroke-width=".250" opacity="1">OFL</text>
<rect x="1323" y="384.2" width="22.500" height="4.600" fill="#b9b9b9" opacity="1"/>
<text x="1360.500" y="389.7" fill="#b9b9b9" stroke="#b9b9b9" stroke-width=".250" opacity="1">Mooring</text>
</g>

</svg>

<div class="abs" style="left:399px;top:496.500px;width:1031px;height:29px;background:#26292a"></div>
<div class="abs" style="left:399px;top:496.500px;width:2px;height:196.500px;background:#0d0f10"></div>
<div class="abs" style="left:914px;top:497.500px;width:24px;height:3px;background:repeating-linear-gradient(90deg,#d9dcde 0 1.300px,transparent 1.300px 2.700px)"></div>
<div class="abs" style="left:401px;top:525px;width:1029px;height:168px;background:#fff"></div>
<div class="abs" style="left:587px;top:541px;width:843px;height:152px;background:repeating-linear-gradient(90deg,#f2f2f2 0 14.300px,#fefefe 14.300px 30.100px)"></div>
<div class="abs" style="left:401px;top:502.500px;width:16px;height:22px;background:#5b6677"><svg width="16" height="22" viewBox="0 0 16 22"><g transform="translate(8.300 11.200)"><circle r="3.700" fill="#fff"/><g stroke="#fff" stroke-width="2.300"><path d="M0-5.300V5.300M-5.300 0H5.300M-3.750-3.750L3.750 3.750M-3.750 3.750L3.750-3.750"/></g><circle r="1.350" fill="#151820"/></g></svg></div>
<div class="abs" style="left:417.800px;top:502.500px;width:15.600px;height:22px;background:#5b6677"><svg width="16" height="22" viewBox="0 0 16 22"><path d="M4 7.300h2.200v8.500H4z" fill="#fff"/><path d="M12.400 6.400v9.900l-6.300-5z" fill="#fff"/></svg></div>
<div class="btab" style="left:434.3px;width:150.1px;background:linear-gradient(#ebebeb,#e4e4e4)">Activities</div>
<div class="btab" style="left:584.9px;width:150.6px;background:linear-gradient(#ebebeb,#e4e4e4)">Cost Equipment</div>
<div class="btab" style="left:736px;width:150.6px;background:linear-gradient(#ebebeb,#e4e4e4)">Cost Operations</div>
<div class="btab" style="left:887.1px;width:150.0px;background:#fff">Connection Profile</div>
<div class="btab" style="left:1037.6px;width:151.0px;background:linear-gradient(#ebebeb,#e4e4e4)">Crossings</div>
<div class="btab" style="left:1189.1px;width:150.4px;background:linear-gradient(#ebebeb,#e4e4e4)">Sharepoint</div>
<div class="abs" style="left:1292.500px;top:496.500px;width:137.500px;height:29.500px;background:#2f3a43"></div>
<div class="abs" style="left:1308px;top:523.500px;width:122px;height:2.500px;background:#1d2429"></div>
<div class="abs" style="left:1292.500px;top:502.500px;width:15px;height:22px;background:#5b6677"><svg width="15" height="22" viewBox="0 0 15 22"><path d="M11.500 6.500v9" stroke="#fff" stroke-width="2"/><path d="M3.500 6.500v9l6.500-4.500z" fill="#fff"/></svg></div>
<svg class="abs" style="left:1320px;top:504px" width="110" height="19" viewBox="1320 504 110 19"><rect x="1322.500" y="506.200" width="18.800" height="14.300" rx="1.500" fill="#fff" stroke="#7d8c98" stroke-width="1"/><rect x="1323.500" y="507.200" width="16.800" height="5.600" fill="#3d9fe6"/><rect x="1370" y="506.200" width="18.600" height="14.300" rx="1.500" fill="#36a6ef" stroke="#5b7f9c" stroke-width="1"/><circle cx="1373.500" cy="509.500" r=".800" fill="#bfe4fa"/><circle cx="1385" cy="516.800" r=".800" fill="#bfe4fa"/><rect x="1417.800" y="506.200" width="18" height="14.300" rx="1.500" fill="#f2f2f2" stroke="#7d8c98" stroke-width="1"/><path d="M1419 511h12M1425 507v7" stroke="#a9c7b5" stroke-width="1.500"/><rect x="1419" y="508" width="11" height="2" fill="#c9d6cd"/></svg>
<div class="abs" style="left:1164.500px;top:524.500px;white-space:nowrap;font-size:11.200px;line-height:15px;color:#222;letter-spacing:-0.080px"><b>X:</b>1334143.28&nbsp; <b>Y:</b>-10327726.30&nbsp; <b>Z:</b>-7485.20&nbsp; |&nbsp; <b>Distance:</b></div>
<div class="blabel" style="top:532.5px">Connection length</div>
<div class="binput" style="top:552.5px;background:#eeeeee">101.08</div>
<div class="blabel" style="top:589px">Sample frequency (resolution)</div>
<div class="binput" style="top:608.8px;background:#ffffff">10</div>
<div class="blabel" style="top:645.5px">Elevation change threshold</div>
<div class="binput" style="top:665.5px;background:#eeeeee">10</div>
<svg class="abs" style="left:587px;top:541px" width="843" height="152" viewBox="587 541 843 152" font-family="Liberation Sans, sans-serif"><path d="M617.200 579.400H1409M617.200 670H1409M617.200 579.400V670" stroke="#d4d4d4" stroke-width="1" fill="none"/><path d="M617.200 626L790.500 666L900 667.200L1339 667.700C1352 665.500 1360 660 1367 652C1381 636 1394 606 1409 579V670H617.200z" fill="#000" fill-opacity=".06" stroke="none"/><path d="M617.200 626L790.500 666L900 667.200L1339 667.700C1352 665.500 1360 660 1367 652C1381 636 1394 606 1409 579" fill="none" stroke="#222" stroke-width="1.200"/><g font-size="7.800" font-weight="bold" fill="#222"><text x="1329.500" y="580.500">-7478.86</text><text x="1329.500" y="674">-7497.15</text></g></svg>
<div class="abs" style="left:401px;top:622px;width:1029px;height:71px;background:linear-gradient(rgba(100,100,100,0) 0,rgba(100,100,100,.27) 28%,rgba(100,100,100,.52) 100%)"></div>

</div>
</body>
</html>
